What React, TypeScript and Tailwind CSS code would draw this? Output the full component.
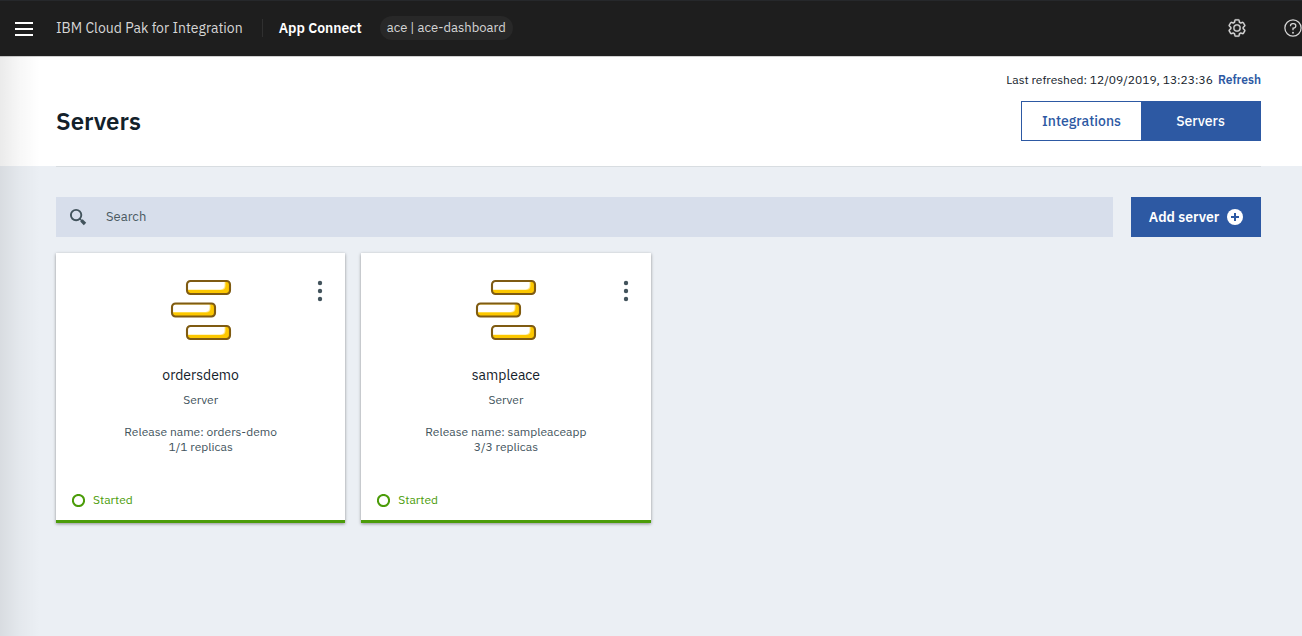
import React from "react";

type Server = {
  name: string;
  release: string;
  replicas: string;
};

const servers: Server[] = [
  { name: "ordersdemo", release: "orders-demo", replicas: "1/1" },
  { name: "sampleace", release: "sampleaceapp", replicas: "3/3" },
];

function GearIcon() {
  return (
    <svg width="20" height="20" viewBox="0 0 32 32" fill="currentColor" stroke="currentColor" strokeWidth="0.4" aria-hidden="true">
      <path d="M27 16.76v-.76c0-.26 0-.51 0-.77l1.92-1.68A2 2 0 0 0 29.3 11L26.94 7a2 2 0 0 0-1.73-1 2 2 0 0 0-.64.1l-2.43.82a11.35 11.35 0 0 0-1.31-.75l-.51-2.52a2 2 0 0 0-2-1.61h-4.68a2 2 0 0 0-2 1.61l-.51 2.52a11.48 11.48 0 0 0-1.32.75L7.43 6.06A2 2 0 0 0 6.79 6a2 2 0 0 0-1.73 1L2.7 11a2 2 0 0 0 .41 2.51L5 15.24v.76c0 .26 0 .51 0 .77l-1.92 1.68A2 2 0 0 0 2.7 21l2.36 4a2 2 0 0 0 1.73 1 2 2 0 0 0 .64-.1l2.43-.82a11.35 11.35 0 0 0 1.31.75l.51 2.52a2 2 0 0 0 2 1.61h4.72a2 2 0 0 0 2-1.61l.51-2.52a11.48 11.48 0 0 0 1.32-.75l2.42.82a2 2 0 0 0 .64.1 2 2 0 0 0 1.73-1l2.28-4a2 2 0 0 0-.41-2.51ZM25.21 24l-3.43-1.16a8.86 8.86 0 0 1-2.71 1.57L18.36 28h-4.72l-.71-3.55a9.36 9.36 0 0 1-2.7-1.57L6.79 24l-2.36-4 2.72-2.4a8.9 8.9 0 0 1 0-3.13L4.43 12l2.36-4 3.43 1.16a8.86 8.86 0 0 1 2.71-1.57L13.64 4h4.72l.71 3.55a9.36 9.36 0 0 1 2.7 1.57L25.21 8l2.36 4-2.72 2.4a8.9 8.9 0 0 1 0 3.13L27.57 20Z" />
      <path d="M16 22a6 6 0 1 1 6-6 5.94 5.94 0 0 1-6 6Zm0-10a3.91 3.91 0 0 0-4 4 3.91 3.91 0 0 0 4 4 3.91 3.91 0 0 0 4-4 3.91 3.91 0 0 0-4-4Z" />
    </svg>
  );
}

function HelpIcon() {
  return (
    <svg width="20" height="20" viewBox="0 0 32 32" fill="currentColor" aria-hidden="true">
      <path d="M16 2a14 14 0 1 0 14 14A14 14 0 0 0 16 2Zm0 26a12 12 0 1 1 12-12 12 12 0 0 1-12 12Z" />
      <circle cx="16" cy="23.5" r="1.5" />
      <path d="M17 8h-1.5a4.49 4.49 0 0 0-4.5 4.5v.5h2v-.5a2.5 2.5 0 0 1 2.5-2.5H17a2.5 2.5 0 0 1 0 5h-2v4.5h2V17a4.5 4.5 0 0 0 0-9Z" />
    </svg>
  );
}

function SearchIcon() {
  return (
    <svg width="18" height="18" viewBox="0 0 18 18" fill="none" stroke="#42535c" aria-hidden="true">
      <circle cx="7.1" cy="7.1" r="5.2" strokeWidth="1.9" />
      <path d="M10.6 10.6 13 13" strokeWidth="1.4" />
      <path d="M12.4 12.4 16 16" strokeWidth="3.4" />
    </svg>
  );
}

function Bar({ x, y }: { x: number; y: number }) {
  return (
    <g transform={`translate(${x} ${y})`}>
      <rect x="1" y="1" width="43" height="13" rx="3.5" fill="#fdc800" />
      <path d="M2 2H39.5V5.5Q39.5 10 35 10H2Z" fill="#ffe98a" />
      <path d="M2 2H38.5V5Q38.5 9.4 34.5 9.4H2Z" fill="#fff" />
      <rect x="1" y="1" width="43" height="13" rx="3.5" fill="none" stroke="#7f5b12" strokeWidth="2.1" />
    </g>
  );
}

function ServerArt() {
  return (
    <svg width="60" height="60" viewBox="0 0 60 60" overflow="visible" aria-hidden="true">
      <Bar x={15} y={0} />
      <Bar x={0} y={22.5} />
      <Bar x={15} y={45} />
    </svg>
  );
}

function ServerCard({ server }: { server: Server }) {
  return (
    <article className="relative flex h-[270px] flex-col items-center border-b-[3px] border-[#4b9c09] bg-white pt-[27px] text-center text-[#42535c] shadow-[0_1px_3px_rgba(0,0,0,0.4)]">
      <button
        type="button"
        aria-label={`Options for ${server.name}`}
        className="absolute top-[22px] right-[11px] flex h-8 w-7 items-center justify-center text-[#42535c]"
      >
        <svg width="6" height="22" viewBox="0 0 6 22" fill="currentColor" aria-hidden="true">
          <circle cx="3" cy="3" r="2.2" />
          <circle cx="3" cy="11" r="2.2" />
          <circle cx="3" cy="19" r="2.2" />
        </svg>
      </button>
      <ServerArt />
      <h2 className="mt-[25px] text-[14px] leading-5 text-[#13212a]">{server.name}</h2>
      <p className="mt-[7px] text-[12px] leading-4">Server</p>
      <div className="mt-4 text-[12px] leading-[15px]">
        <p>Release name: {server.release}</p>
        <p>{server.replicas} replicas</p>
      </div>
      <div className="mt-auto mb-3 flex items-center gap-2 self-start pl-4 text-[12px] leading-4 text-[#4b9c09]">
        <svg width="13" height="13" viewBox="0 0 13 13" fill="none" stroke="currentColor" strokeWidth="2" aria-hidden="true">
          <circle cx="6.5" cy="6.5" r="5.6" />
        </svg>
        Started
      </div>
    </article>
  );
}

export default function App() {
  return (
    <div className="relative flex min-h-screen flex-col bg-[#ebeff4] font-['IBM_Plex_Sans',Roboto,sans-serif] text-[#13212a]">
      <header className="flex h-14 shrink-0 items-center border-t border-[#26282b] bg-[#1e1e1e] pb-[2px] text-[#d6d6d6]">
        <button type="button" aria-label="Menu" className="mt-[2px] ml-[15px] text-white">
          <svg width="18" height="16" viewBox="0 0 18 16" fill="currentColor" aria-hidden="true">
            <path d="M0 1h18v2H0zM0 7h18v2H0zM0 13h18v2H0z" />
          </svg>
        </button>
        <span className="ml-[23px] text-[14px] leading-5">IBM Cloud Pak for Integration</span>
        <span className="mr-4 ml-[19px] h-[18px] w-px bg-[#303030]" />
        <span className="text-[14px] leading-5 font-semibold text-white">App Connect</span>
        <span className="ml-[18px] rounded-full bg-[#282828] px-[7px] py-1 text-[13px] leading-4">ace | ace-dashboard</span>
        <div className="ml-auto flex items-center gap-9">
          <button type="button" aria-label="Settings"><GearIcon /></button>
          <button type="button" aria-label="Help" className="-mr-px"><HelpIcon /></button>
        </div>
      </header>

      <main className="relative grow">
        <section className="border-t border-[#cfcfcf] bg-white pr-[41px] pl-14">
          <div className="flex h-[109px] items-end justify-between pb-[25px]">
            <h1 className="pb-1 text-[24px] leading-8 font-semibold">Servers</h1>
            <div className="flex flex-col items-end gap-[13px]">
              <p className="text-[12px] leading-4">
                Last refreshed: 12/09/2019, 13:23:36
                <button type="button" className="ml-[5px] font-semibold text-[#2d59a3]">Refresh</button>
              </p>
              <div className="flex h-10 w-60 border border-[#2d59a3] text-[14px] font-medium">
                <button type="button" className="flex-1 bg-white text-[#2d59a3]">Integrations</button>
                <button type="button" aria-pressed="true" className="flex-1 bg-[#2d59a3] text-white">Servers</button>
              </div>
            </div>
          </div>
        </section>

        <section className="pr-[41px] pl-14">
          <div className="flex gap-[18px] border-t border-[#d8dde1] pt-[30px]">
            <label className="flex h-10 grow items-center gap-[19px] bg-[#d7deeb] pl-[13px]">
              <SearchIcon />
              <input
                type="search"
                aria-label="Search"
                placeholder="Search"
                className="grow bg-transparent text-[13px] leading-5 outline-none placeholder:text-[#4a5961]"
              />
            </label>
            <button type="button" className="flex h-10 w-[130px] items-center justify-center gap-2 bg-[#2d59a3] text-[14px] font-semibold text-white">
              Add server
              <svg width="16" height="16" viewBox="0 0 16 16" aria-hidden="true">
                <circle cx="8" cy="8" r="8" fill="#fff" />
                <path d="M8 4v8M4 8h8" stroke="#2d59a3" strokeWidth="2" />
              </svg>
            </button>
          </div>
          <div className="mt-4 grid grid-cols-4 gap-4">
            {servers.map((server) => (
              <ServerCard key={server.name} server={server} />
            ))}
          </div>
        </section>
        <div className="pointer-events-none absolute inset-y-0 left-0 w-10 bg-linear-to-r from-black/8 via-black/3 to-transparent" />
      </main>
    </div>
  );
}
